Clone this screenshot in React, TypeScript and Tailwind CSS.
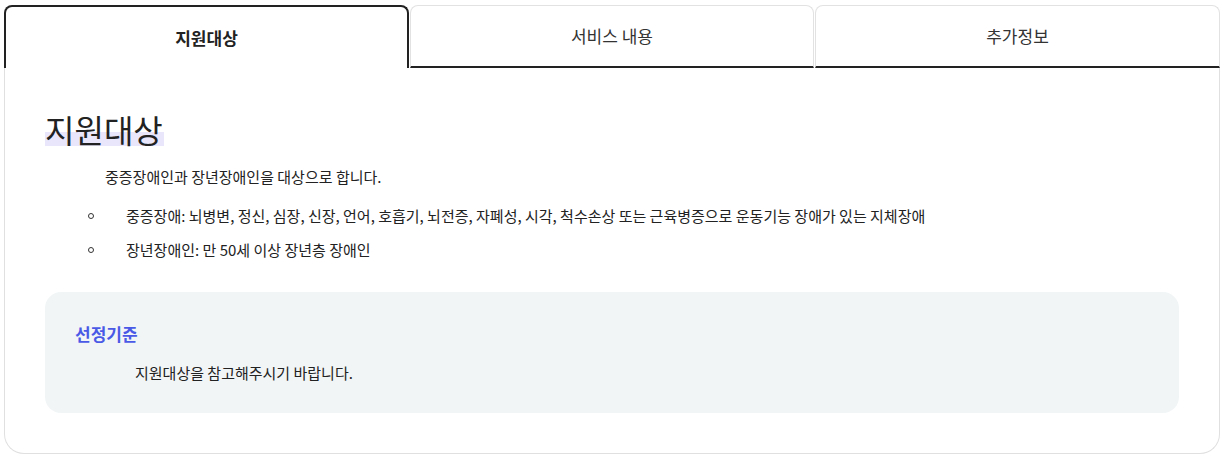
import React, { useState } from 'react';

const tabs = [
  { label: '지원대상', w: 'w-[405px]' },
  { label: '서비스 내용', w: 'w-[404px] ml-px' },
  { label: '추가정보', w: 'flex-1 ml-px' },
];

export default function App() {
  const [active, setActive] = useState(0);

  return (
    <div
      className="bg-white min-h-screen pl-[4px] pr-[4px] pt-[5px] text-[#222]"
      style={{ fontFamily: '"Noto Sans CJK KR", "Noto Sans", sans-serif' }}
    >
      <div className="flex h-[63px]">
        {tabs.map((t, i) =>
          i === active ? (
            <button
              key={t.label}
              onClick={() => setActive(i)}
              className={`${t.w} rounded-t-lg border-2 border-b-0 border-[#222] text-[17px] font-bold bg-white`}
            >
              {t.label}
            </button>
          ) : (
            <button
              key={t.label}
              onClick={() => setActive(i)}
              className={`${t.w} rounded-t-lg border border-[#e2e2e2] border-b-2 border-b-[#222] text-[17px] text-[#333] bg-white`}
            >
              {t.label}
            </button>
          )
        )}
      </div>

      <div className="border border-t-0 border-[#e0e0e0] rounded-b-[20px] px-[40px] pt-[38px] pb-[40px]">
        <h2 className="text-[32px] leading-[46px] font-normal">
          <span className="bg-[linear-gradient(transparent_56%,#e9e6fb_56%,#e9e6fb_87%,transparent_87%)] pr-px">지원대상</span>
        </h2>
        <p className="mt-[14px] pl-[60px] text-[15px] leading-[22px]">중증장애인과 장년장애인을 대상으로 합니다.</p>
        <ul className="mt-[17px] text-[15px] leading-[22px]">
          <li className="flex items-center">
            <span className="ml-[43px] w-[6px] h-[6px] rounded-full border border-[#333]" />
            <span className="ml-[32px]">
              중증장애: 뇌병변, 정신, 심장, 신장, 언어, 호흡기, 뇌전증, 자폐성, 시각, 척수손상 또는 근육병증으로 운동기능 장애가 있는 지체장애
            </span>
          </li>
          <li className="flex items-center mt-[12px]">
            <span className="ml-[43px] w-[6px] h-[6px] rounded-full border border-[#333]" />
            <span className="ml-[32px]">장년장애인: 만 50세 이상 장년층 장애인</span>
          </li>
        </ul>

        <div className="mt-[31px] bg-[#f2f5f6] rounded-[16px] pl-[30px] pt-[30px] pb-[29px]">
          <h3 className="text-[17px] leading-[24px] font-bold text-[#4a5ae6]">선정기준</h3>
          <p className="mt-[16px] pl-[60px] text-[15px] leading-[22px]">지원대상을 참고해주시기 바랍니다.</p>
        </div>
      </div>
    </div>
  );
}
